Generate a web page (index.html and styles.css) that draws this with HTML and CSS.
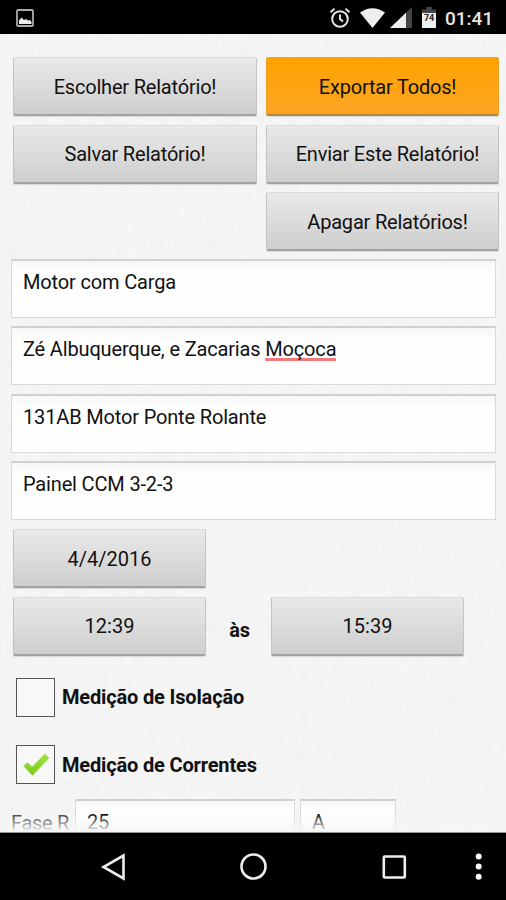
FILE: index.html
```html
<!DOCTYPE html>
<html lang="pt-BR">
<head>
    <meta charset="UTF-8">
    <meta name="viewport" content="width=device-width, initial-scale=1.0">
    <title>Relatório</title>
    <link rel="stylesheet" href="styles.css">
</head>
<body>
    <div class="screen">
        <header class="status-bar">
            <svg class="picture-icon" width="18" height="18" viewBox="0 0 18 18">
                <rect x="1" y="1" width="16" height="16" rx="1" fill="none" stroke="#aaa" stroke-width="1.8"/>
                <path d="M3 15V11.500l2.500-3 2.500 2.500 2-1 2 1.500 2-.5 1.500 2V15z" fill="#eee"/>
            </svg>
            <div class="status-icons">
                <svg width="22" height="22" viewBox="0 0 22 22" fill="none" stroke="#e6e6e6" stroke-width="2">
                    <circle cx="11" cy="12" r="7.800"/>
                    <path d="M11 7.500V12l3 2.500M1.500 5.200l4-3.400M20.500 5.200l-4-3.400"/>
                </svg>
                <svg class="wifi" width="25" height="20" viewBox="0 0 25 20">
                    <path d="M0 4.500Q12.500-4 25 4.500L12.500 20z" fill="#eee"/>
                </svg>
                <svg class="signal" width="22" height="21" viewBox="0 0 22 21">
                    <path d="M0 21L22 0v21z" fill="#444"/>
                    <path d="M0 21L16 5.700V21z" fill="#eee"/>
                </svg>
                <svg class="battery" width="14" height="21" viewBox="0 0 14 21">
                    <path d="M4 0h6v2.500h4V7H0V2.500h4z" fill="#444"/>
                    <path d="M0 6h14v15H0z" fill="#eee"/>
                    <text x="7" y="13.500" text-anchor="middle" class="battery-level">74</text>
                </svg>
                <span class="clock">01:41</span>
            </div>
        </header>

        <main class="content">
            <!-- Paper grain -->
            <svg class="paper" width="506" height="799">
                <filter id="grain" x="0" y="0" width="100%" height="100%">
                    <feTurbulence type="fractalNoise" baseFrequency="0.12 0.07" numOctaves="3" seed="4"/>
                    <feColorMatrix values="0 0 0 0 0.6  0 0 0 0 0.6  0 0 0 0 0.6  0.16 0 0 0 -0.04"/>
                </filter>
                <rect width="506" height="799" filter="url(#grain)"/>
            </svg>

            <div class="actions">
                <button class="btn">Escolher Relatório!</button>
                <button class="btn btn-export">Exportar Todos!</button>
                <button class="btn">Salvar Relatório!</button>
                <button class="btn btn-side">Enviar Este Relatório!</button>
                <button class="btn btn-last">Apagar Relatórios!</button>
            </div>

            <div class="fields">
                <div class="field">Motor com Carga</div>
                <div class="field">Zé Albuquerque, e Zacarias <span class="misspelled">Moçoca</span></div>
                <div class="field">131AB Motor Ponte Rolante</div>
                <div class="field">Painel CCM 3-2-3</div>
            </div>

            <div class="times">
                <button class="btn btn-date">4/4/2016</button>
                <div class="time-row">
                    <button class="btn">12:39</button>
                    <span class="until">às</span>
                    <button class="btn">15:39</button>
                </div>
            </div>

            <div class="checks">
                <label class="check"><span class="box"></span>Medição de Isolação</label>
                <label class="check">
                    <span class="box">
                        <svg width="28" height="24" viewBox="0 0 28 24">
                            <defs>
                                <linearGradient id="green" x1="0" y1="0" x2="0" y2="1">
                                    <stop offset="0" stop-color="#a0e63c"/>
                                    <stop offset="1" stop-color="#74c91c"/>
                                </linearGradient>
                            </defs>
                            <path d="M1.500 13L5.500 9.500 10 14 23 1 27 5 10.500 22.500z" fill="url(#green)" stroke="#a9dc6c" stroke-width=".8" stroke-linejoin="round"/>
                        </svg>
                    </span>Medição de Correntes
                </label>
            </div>

            <div class="phase-row">
                <span class="phase-label">Fase R</span>
                <div class="field phase-value">25</div>
                <div class="field phase-unit">A</div>
            </div>
        </main>

        <nav class="nav-bar">
            <svg width="506" height="67" viewBox="0 0 506 67" fill="none" stroke="#eee" stroke-width="2.600">
                <path d="M123.500 22.500v23L103.500 34z"/>
                <circle cx="253.500" cy="33.500" r="12"/>
                <rect x="383.800" y="23.500" width="21" height="21" rx="1"/>
                <g fill="#fff" stroke="none">
                    <circle cx="478.700" cy="23.500" r="3"/>
                    <circle cx="478.700" cy="33.500" r="3"/>
                    <circle cx="478.700" cy="43.800" r="3"/>
                </g>
            </svg>
        </nav>
    </div>
</body>
</html>
```
FILE: styles.css
```css
* {
    box-sizing: border-box;
}
body {
    margin: 0;
    background: #000;
    font-family: Roboto, "Liberation Sans", sans-serif;
    font-size: 20px;
    letter-spacing: -0.16px;
    color: #111;
}
.screen {
    display: flex;
    flex-direction: column;
    width: 506px;
    height: 900px;
    overflow: hidden;
}

/* Status bar */
.status-bar {
    display: flex;
    justify-content: space-between;
    align-items: center;
    height: 34px;
    padding: 1px 11px 0 16px;
    background: #000;
}
.status-icons {
    display: flex;
    align-items: center;
    color: #e6e6e6;
}
.wifi {
    margin-left: 9px;
}
.signal {
    margin-left: 5px;
}
.battery {
    margin-left: 10px;
}
.battery-level {
    font-size: 9px;
    font-weight: bold;
    fill: #222;
}
.clock {
    width: 50px;
    margin-left: 9px;
    padding-top: 1px;
    font-size: 19px;
    font-weight: 500;
    letter-spacing: 0;
    white-space: nowrap;
}

/* Form */
.content {
    position: relative;
    height: 799px;
    padding: 23px 7px 0 11px;
    background: #f6f6f6;
    border-bottom: 1px solid #999;
    overflow: hidden;
}
.content > * {
    position: relative;
}
.content > .paper {
    position: absolute;
    top: 0;
    left: 0;
}
/* Fades the last row into the bottom edge */
.content::after {
    content: "";
    position: absolute;
    left: 0;
    right: 0;
    bottom: 0;
    height: 18px;
    background: linear-gradient(rgba(246, 246, 246, 0), #f6f6f6);
}
.actions {
    display: grid;
    grid-template-columns: 244px 233px;
    grid-auto-rows: 59px;
    gap: 8.5px 9px;
    padding-left: 2px;
}
.btn {
    height: 59px;
    padding: 1px 0 0;
    border: 1px solid #c4c4c4;
    border-top-color: #dadada;
    border-bottom: 2px solid #a2a2a2;
    border-radius: 2px;
    background: linear-gradient(#e9e9e9, #cecece);
    box-shadow: 0 1px 1px rgba(0, 0, 0, 0.12);
    font: inherit;
    letter-spacing: -0.2px;
    color: #111;
}
.btn-export {
    padding-left: 10px;
    background: linear-gradient(#ffa200, #fca524);
    border-color: #eda02c;
    border-bottom-color: #b98642;
}
.btn-side {
    padding-left: 10px;
}
.btn-last {
    grid-column: 2;
    padding-left: 10px;
}
.fields {
    display: flex;
    flex-direction: column;
    gap: 8.4px;
    padding: 8px 3px 0 0;
}
.field {
    height: 59px;
    padding: 9px 11px;
    border: 1px solid #d9d9d9;
    border-top: 2px solid #d0d0d0;
    background: linear-gradient(#f7f7f7, #fefefe 12px);
    line-height: 24px;
}
.misspelled {
    display: inline-block;
    height: 24px;
    border-bottom: 3px solid #f27a7a;
}
.times {
    display: flex;
    flex-direction: column;
    gap: 8.5px;
    padding: 9px 0 0 2px;
}
.times .btn {
    width: 193px;
    letter-spacing: 0;
}
.time-row {
    display: flex;
    align-items: center;
}
.until {
    width: 65px;
    padding: 7px 0 0 2px;
    text-align: center;
    font-weight: bold;
}
.checks {
    display: flex;
    flex-direction: column;
    gap: 28.5px;
    padding: 22px 0 0 5px;
}
.check {
    display: flex;
    align-items: center;
    gap: 7px;
    height: 39px;
    font-weight: bold;
    white-space: nowrap;
}
.box {
    display: flex;
    align-items: center;
    justify-content: center;
    width: 39px;
    height: 39px;
    border: 1.5px solid #555;
    background: #f8f8f8;
}
.phase-row {
    display: flex;
    padding-top: 15px;
}
.phase-label {
    width: 64px;
    padding-top: 15px;
    line-height: 18px;
    letter-spacing: -0.3px;
    color: #444;
}
.phase-value {
    width: 220px;
}
.phase-unit {
    width: 96px;
    margin-left: 5px;
}

/* Navigation bar */
.nav-bar {
    height: 67px;
    background: #000;
}
```
